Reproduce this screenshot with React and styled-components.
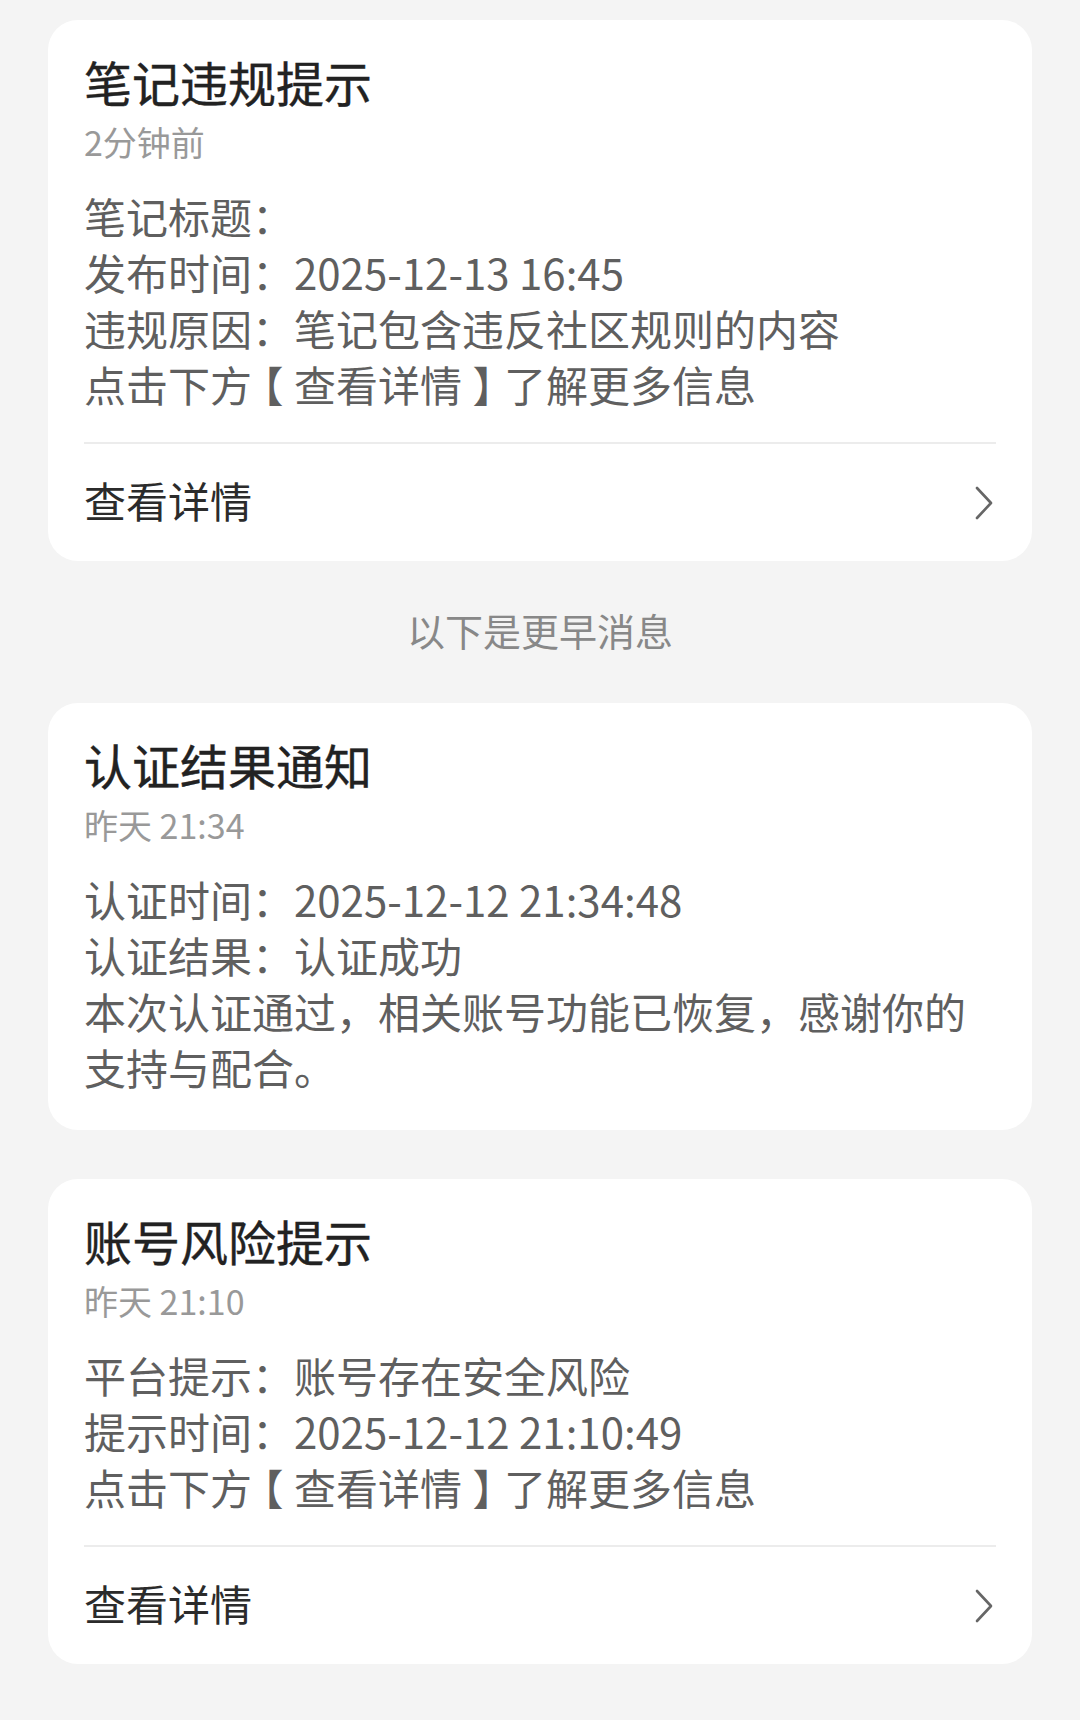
import React from 'react';
import styled, { createGlobalStyle } from 'styled-components';

const GlobalStyle = createGlobalStyle`
  html, body {
    margin: 0;
    padding: 0;
    background: #f4f4f4;
  }
  body {
    font-family: 'Noto Sans CJK SC', 'Noto Sans', sans-serif;
  }
`;

const Page = styled.div`
  width: 1080px;
  min-height: 1720px;
  box-sizing: border-box;
  padding: 20px 48px;
  background: #f4f4f4;
  display: flex;
  flex-direction: column;
`;

const Card = styled.div`
  background: #fff;
  border-radius: 30px;
  padding: 32px 36px ${(p) => (p.$withAction ? '0' : '35px')};
  margin-bottom: ${(p) => p.$gap || 0}px;
`;

const Title = styled.div`
  font-size: 48px;
  line-height: 58px;
  padding-bottom: 2px;
  font-weight: 400;
  color: #222;
  -webkit-text-stroke: 0.4px #222;
`;

const Time = styled.div`
  margin-top: 8px;
  font-size: 34px;
  line-height: 44px;
  color: #999;
`;

const Body = styled.div`
  margin-top: 24px;
  font-size: 42px;
  line-height: 56px;
  color: #5f5f5f;
`;

const Line = styled.div``;

const Bracket = styled.span`
  display: inline-block;
  width: 1em;
  text-align: center;
  font-feature-settings: 'halt';
`;

const Divider = styled.div`
  margin-top: 30px;
  height: 2px;
  background: #ececec;
`;

const ActionRow = styled.div`
  height: 117px;
  display: flex;
  align-items: center;
  justify-content: space-between;
  font-size: 42px;
  color: #2b2b2b;
  cursor: pointer;
`;

const ActionLabel = styled.span`
  margin-bottom: 6px;
`;

const Chevron = styled.svg`
  width: 20px;
  height: 34px;
  margin-right: 2px;
`;

const Separator = styled.div`
  margin: 44px 0 48px;
  text-align: center;
  font-size: 38px;
  line-height: 50px;
  color: #888;
`;

const MoreInfo = () => (
  <Line>
    点击下方<Bracket>【</Bracket>查看详情<Bracket>】</Bracket>了解更多信息
  </Line>
);

const Action = () => (
  <>
    <Divider />
    <ActionRow>
      <ActionLabel>查看详情</ActionLabel>
      <Chevron viewBox="0 0 20 34" fill="none">
        <path d="M3 2 L17 17 L3 32" stroke="#666" strokeWidth="2.6" strokeLinecap="round" strokeLinejoin="round" />
      </Chevron>
    </ActionRow>
  </>
);

const App = () => (
  <Page>
    <GlobalStyle />
    <Card $withAction>
      <Title>笔记违规提示</Title>
      <Time>2分钟前</Time>
      <Body>
        <Line>笔记标题：</Line>
        <Line>发布时间：2025-12-13 16:45</Line>
        <Line>违规原因：笔记包含违反社区规则的内容</Line>
        <MoreInfo />
      </Body>
      <Action />
    </Card>

    <Separator>以下是更早消息</Separator>

    <Card $gap={49}>
      <Title>认证结果通知</Title>
      <Time>昨天 21:34</Time>
      <Body>
        <Line>认证时间：2025-12-12 21:34:48</Line>
        <Line>认证结果：认证成功</Line>
        <Line>本次认证通过，相关账号功能已恢复，感谢你的支持与配合。</Line>
      </Body>
    </Card>

    <Card $withAction>
      <Title>账号风险提示</Title>
      <Time>昨天 21:10</Time>
      <Body>
        <Line>平台提示：账号存在安全风险</Line>
        <Line>提示时间：2025-12-12 21:10:49</Line>
        <MoreInfo />
      </Body>
      <Action />
    </Card>
  </Page>
);

export default App;
